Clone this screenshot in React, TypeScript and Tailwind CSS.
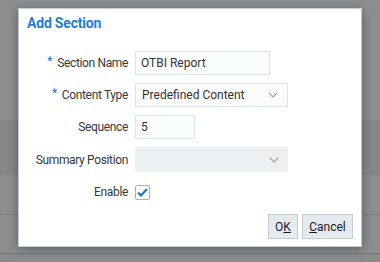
import React from "react";

const font = { fontFamily: "Roboto, 'Liberation Sans', Arial, sans-serif" };

function Chevron() {
  return (
    <svg width="10" height="6" viewBox="0 0 10 6" className="mr-[9px]">
      <path d="M1 1 L5 5 L9 1" fill="none" stroke="#a3a3a3" strokeWidth="1.1" />
    </svg>
  );
}

function Label({ text, req }: { text: string; req?: boolean }) {
  return (
    <div className="flex items-center justify-end h-[24px] text-[12px] text-[#383838] tracking-[-0.35px]">
      {req && <span className="text-[#1a73d9] text-[12px] mr-[5px] -mt-[5px]">*</span>}
      <span>{text}</span>
    </div>
  );
}

export default function App() {
  return (
    <div className="relative w-[380px] h-[262px] overflow-hidden" style={font}>
      <div className="flex flex-col h-full">
        <div className="h-[120px] bg-[#8e8e8e]" />
        <div className="h-[55px] bg-[#868686]" />
        <div className="h-[39px] bg-[#8e8e8e]" />
        <div className="h-[1px] bg-[#7c7c7c]" />
        <div className="h-[38px] bg-[#8e8e8e]" />
        <div className="h-[1px] bg-[#777777]" />
        <div className="flex-1 bg-[#8b8b8b]" />
      </div>

      <div className="absolute left-[18px] top-[8px] w-[344px] h-[239px] bg-white border border-[#c5cdd4] shadow-[0_2px_10px_rgba(0,0,0,0.35)] flex flex-col">
        <div className="pl-[8px] pt-[4px] h-[42px] text-[14px] font-bold text-[#1d7fd6] tracking-[-0.2px]">
          Add Section
        </div>
        <div className="grid grid-cols-[109px_auto] gap-x-[7px] gap-y-[8px] items-center">
          <Label text="Section Name" req />
          <div className="w-[135px] h-[24px] border border-[#dde3e8] bg-[#fbfcfd] flex items-center pl-[5px] text-[12px] text-[#333]">
            OTBI Report
          </div>
          <Label text="Content Type" req />
          <div className="w-[153px] h-[24px] border border-[#dde3e8] bg-[#fbfcfd] flex items-center justify-between pl-[6px] text-[12px] text-[#333]">
            <span>Predefined Content</span>
            <Chevron />
          </div>
          <Label text="Sequence" />
          <div className="w-[60px] h-[24px] border border-[#dde3e8] bg-[#fbfcfd] flex items-center pl-[5px] text-[12px] text-[#333]">
            5
          </div>
          <Label text="Summary Position" />
          <div className="w-[153px] h-[25px] bg-[#eeeff1] flex items-center justify-end">
            <Chevron />
          </div>
          <Label text="Enable" />
          <div className="h-[24px] flex items-center">
            <div className="w-[15px] h-[15px] rounded-[2px] border-[1.5px] border-[#86b4ee] bg-white flex items-center justify-center">
              <svg width="11" height="9" viewBox="0 0 11 9">
                <path d="M1 4.5 L4 7.5 L10 1" fill="none" stroke="#1b6fd8" strokeWidth="2" />
              </svg>
            </div>
          </div>
        </div>
        <div className="flex justify-end gap-[4px] pr-[8px] mt-[10px]">
          <button className="h-[25px] w-[30px] border border-[#c5cdd4] bg-[#e5eaef] text-[12px] text-[#1a1a1a] flex items-center justify-center">
            O<span className="underline">K</span>
          </button>
          <button className="h-[25px] w-[51px] border border-[#c5cdd4] bg-[#e5eaef] text-[12px] text-[#1a1a1a] flex items-center justify-center">
            <span className="underline">C</span>ancel
          </button>
        </div>
      </div>
    </div>
  );
}
